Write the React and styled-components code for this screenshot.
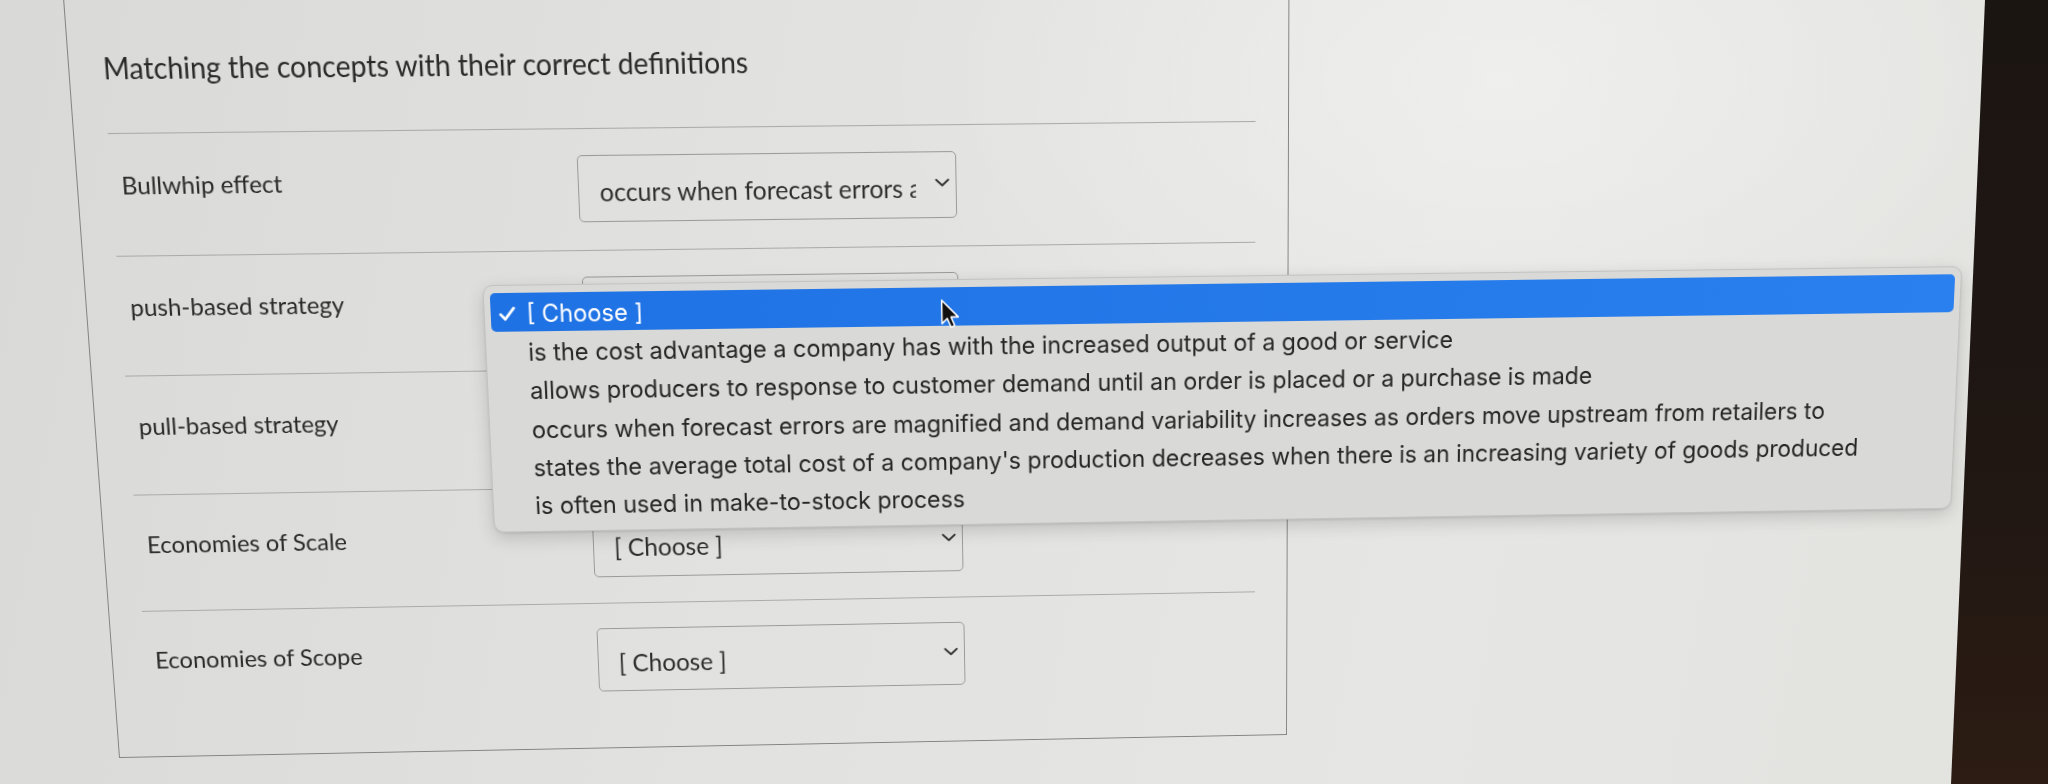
import styled, { createGlobalStyle } from "styled-components";

// The screen is shot at a slight angle, so the flat page is projected
// onto a tilted quad. Corners of the card (flat) -> where they land.
const FLAT = [
  [76, 127],
  [1289, 127],
  [76, 747],
  [1289, 747],
];
const TILTED = [
  [73, 133.4],
  [1289, 120.6],
  [119, 758],
  [1287, 735],
];

function solve(A, b) {
  const n = b.length;
  const M = A.map((row, i) => [...row, b[i]]);
  for (let c = 0; c < n; c++) {
    let p = c;
    for (let r = c + 1; r < n; r++) {
      if (Math.abs(M[r][c]) > Math.abs(M[p][c])) p = r;
    }
    [M[c], M[p]] = [M[p], M[c]];
    for (let r = 0; r < n; r++) {
      if (r === c) continue;
      const f = M[r][c] / M[c][c];
      for (let k = c; k <= n; k++) M[r][k] -= f * M[c][k];
    }
  }
  return M.map((row, i) => row[n] / row[i]);
}

function homography(src, dst) {
  const A = [];
  const b = [];
  for (let i = 0; i < 4; i++) {
    const [x, y] = src[i];
    const [u, v] = dst[i];
    A.push([x, y, 1, 0, 0, 0, -u * x, -u * y]);
    b.push(u);
    A.push([0, 0, 0, x, y, 1, -v * x, -v * y]);
    b.push(v);
  }
  const h = solve(A, b);
  return `matrix3d(${h[0]}, ${h[3]}, 0, ${h[6]}, ${h[1]}, ${h[4]}, 0, ${h[7]}, 0, 0, 1, 0, ${h[2]}, ${h[5]}, 0, 1)`;
}

const STAGE_TRANSFORM = homography(FLAT, TILTED);

const OPTIONS = [
  "is the cost advantage a company has with the increased output of a good or service",
  "allows producers to response to customer demand until an order is placed or a purchase is made",
  "occurs when forecast errors are magnified and demand variability increases as orders move upstream from retailers to",
  "states the average total cost of a company's production decreases when there is an increasing variety of goods produced",
  "is often used in make-to-stock process",
];

const PAIRS = [
  { term: "Bullwhip effect", value: OPTIONS[2] },
  { term: "push-based strategy", value: "[ Choose ]", open: true },
  { term: "pull-based strategy", value: "[ Choose ]" },
  { term: "Economies of Scale", value: "[ Choose ]" },
  { term: "Economies of Scope", value: "[ Choose ]" },
];

function Chevron() {
  return (
    <ChevronIcon viewBox="0 0 16 9" aria-hidden="true">
      <path d="M1.5 1.5 L8 7.5 L14.5 1.5" />
    </ChevronIcon>
  );
}

function Pointer() {
  return (
    <Cursor viewBox="0 0 19 28" aria-hidden="true">
      <path d="M1.5 1.5 L1.5 22.5 L6.4 17.8 L9.8 25.8 L13.2 24.3 L9.9 16.6 L16.6 16.6 Z" />
    </Cursor>
  );
}

function Menu() {
  return (
    <Dropdown role="listbox">
      <Option selected>
        <CheckSlot>
          <svg viewBox="0 0 16 14" width="17" height="15" aria-hidden="true">
            <path
              d="M1.8 7.6 L6 12 L14.4 1.8"
              fill="none"
              stroke="#fff"
              strokeWidth="2.6"
              strokeLinecap="round"
              strokeLinejoin="round"
            />
          </svg>
        </CheckSlot>
        [ Choose ]
      </Option>
      {OPTIONS.map((text) => (
        <Option key={text}>
          <CheckSlot />
          {text}
        </Option>
      ))}
      <Pointer />
    </Dropdown>
  );
}

export default function App() {
  return (
    <Page>
      <GlobalStyle />
      <Stage>
        <Card>
          <Title>Matching the concepts with their correct definitions</Title>
          {PAIRS.map((pair) => (
            <Row key={pair.term}>
              <Term>{pair.term}</Term>
              <Select>
                <SelectValue>{pair.value}</SelectValue>
                <Chevron />
                {pair.open && <Menu />}
              </Select>
            </Row>
          ))}
        </Card>
      </Stage>
      <Bezel />
    </Page>
  );
}

const GlobalStyle = createGlobalStyle`
  *, *::before, *::after {
    box-sizing: border-box;
  }

  html, body {
    margin: 0;
    padding: 0;
    background: #e2e2e0;
  }
`;

const Page = styled.main`
  position: relative;
  width: 2048px;
  height: 784px;
  overflow: hidden;
  background:
    radial-gradient(ellipse 900px 500px at 1500px 80px, rgba(255, 255, 255, 0.35), transparent 70%),
    linear-gradient(100deg, #d9d9d7 0%, #e1e1df 35%, #e6e6e4 70%, #e2e2df 100%);
`;

const Stage = styled.div`
  width: 2048px;
  height: 784px;
  padding-left: 76px;
  transform-origin: 0 0;
  transform: ${STAGE_TRANSFORM};
`;

const Card = styled.section`
  width: 1213px;
  height: 747px;
  padding: 48px 33px 0;
  border: 1.5px solid #838381;
  border-top: none;
  font-family: Lato, "Open Sans", sans-serif;
  color: #2a2a2a;
`;

const Title = styled.h2`
  margin: 0 0 45px;
  font-size: 28px;
  line-height: 34px;
  font-weight: 400;
`;

const Row = styled.div`
  display: flex;
  height: 117.5px;
  border-top: 1.5px solid #aaaaa8;
`;

const Term = styled.div`
  width: 461.5px;
  padding: 34px 0 0 10px;
  font-size: 24px;
  line-height: 30px;
`;

const Select = styled.div`
  position: relative;
  display: flex;
  align-items: center;
  width: 380px;
  height: 65px;
  margin-top: 25px;
  padding: 4px 6px 0 21px;
  border: 1.5px solid #9a9a98;
  border-radius: 5px;
`;

const SelectValue = styled.span`
  flex: 1;
  overflow: hidden;
  white-space: nowrap;
  font-size: 25px;
  line-height: 30px;
  color: #2e2e2e;
`;

const ChevronIcon = styled.svg`
  width: 15px;
  height: 9px;
  margin: 0 0 8px 19px;
  flex: none;
  fill: none;
  stroke: #333;
  stroke-width: 2;
  stroke-linecap: round;
  stroke-linejoin: round;
`;

const Dropdown = styled.div`
  position: absolute;
  z-index: 2;
  left: -100.5px;
  top: 6.5px;
  width: 1515px;
  height: 245.8px;
  padding: 7px 6px;
  background: #d9d9d7;
  border: 1px solid #c3c3c1;
  border-radius: 10px;
  box-shadow: 0 6px 18px rgba(0, 0, 0, 0.16), 0 1px 3px rgba(0, 0, 0, 0.1);
`;

const Option = styled.div`
  display: flex;
  align-items: center;
  height: 38.3px;
  padding-top: 2px;
  border-radius: 5px;
  font-family: Inter, "Liberation Sans", sans-serif;
  font-size: 23.8px;
  white-space: nowrap;
  color: ${(p) => (p.selected ? "#ffffff" : "#262626")};
  background: ${(p) => (p.selected ? "linear-gradient(90deg, #1f72e4, #2a80ee)" : "transparent")};
`;

const CheckSlot = styled.span`
  display: flex;
  align-items: center;
  width: 36px;
  padding-left: 8px;
  flex: none;
`;

const Cursor = styled.svg`
  position: absolute;
  left: 460px;
  top: 18px;
  width: 21px;
  height: 31px;
  fill: #111;
  stroke: #fff;
  stroke-width: 1.4;
  stroke-linejoin: round;
`;

const Bezel = styled.div`
  position: absolute;
  top: 0;
  right: 0;
  width: 97px;
  height: 784px;
  background: linear-gradient(180deg, #1b1512 0%, #201713 60%, #2c1c13 100%);
  clip-path: polygon(34px 0, 100% 0, 100% 100%, 0 100%);
`;
